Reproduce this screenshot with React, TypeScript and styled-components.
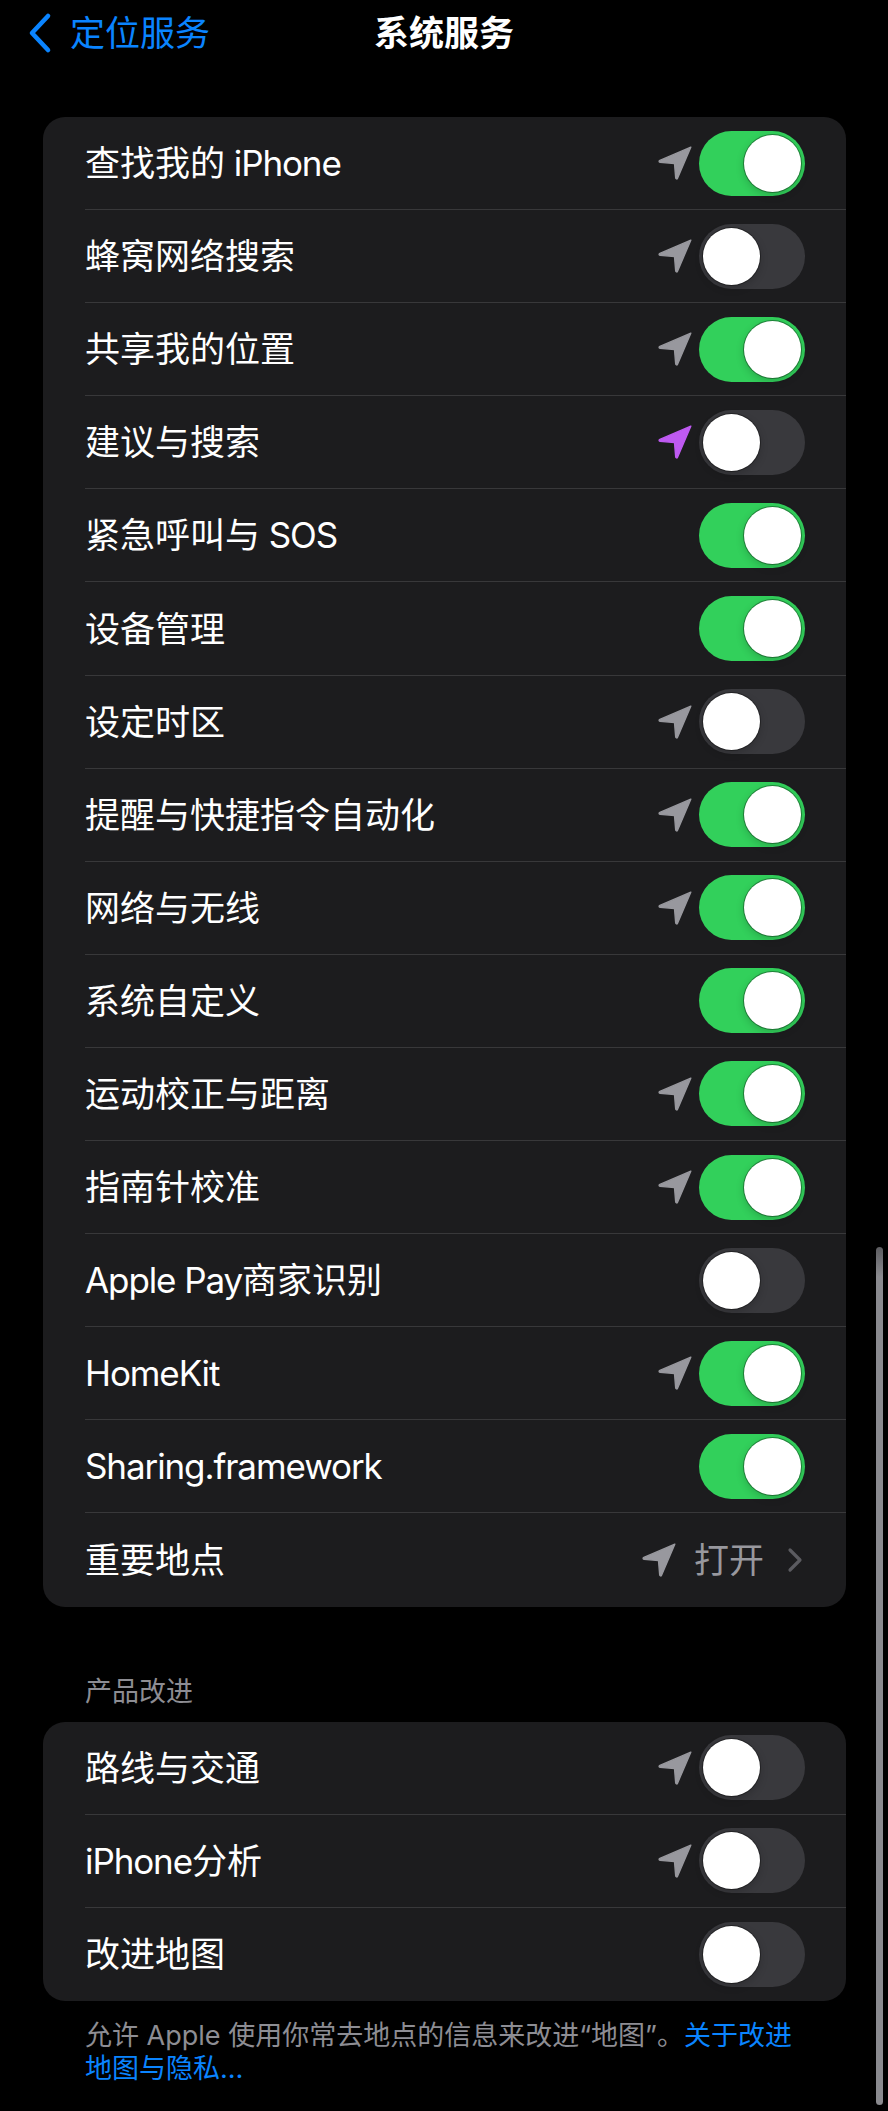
import { FunctionComponent } from 'react';
import styled, { createGlobalStyle } from 'styled-components';

const GlobalStyle = createGlobalStyle`
  html, body {
    margin: 0;
    padding: 0;
    background: #000;
  }
  body {
    font-family: Inter, "Noto Sans CJK SC", sans-serif;
    -webkit-font-smoothing: antialiased;
  }
`;

const Page = styled.div`
  position: relative;
  min-height: 2111px;
  background: #000;
  color: #fff;
  padding-bottom: 26px;
  box-sizing: border-box;
`;

const NavBar = styled.div`
  height: 66px;
  display: grid;
  grid-template-columns: 1fr auto 1fr;
  align-items: center;
`;

const BackButton = styled.div`
  display: flex;
  align-items: center;
  gap: 17px;
  padding-left: 27px;
  color: #0a84ff;
  font-size: 35px;
  line-height: 40px;
`;

const Title = styled.div`
  font-size: 35px;
  line-height: 40px;
  font-weight: 600;
  color: #fff;
`;

const Content = styled.div`
  padding: 51px 42px 0 43px;
  display: flex;
  flex-direction: column;
`;

const Card = styled.div`
  background: #1c1c1e;
  border-radius: 22px;
  overflow: hidden;
`;

const Row = styled.div`
  padding-left: 42px;
`;

const RowInner = styled.div<{ $last?: boolean }>`
  height: 93.1px;
  box-sizing: border-box;
  display: flex;
  align-items: center;
  padding-right: 41px;
  border-bottom: ${(p) => (p.$last ? 'none' : '1.5px solid #38383a')};
`;

const Label = styled.div`
  flex: 1;
  font-size: 35px;
  line-height: 42px;
  color: #fff;
  white-space: nowrap;
`;

const Latin = styled.span`
  letter-spacing: -1.1px;
`;

const Accessory = styled.div`
  display: flex;
  align-items: center;
  gap: 7px;
`;

const Track = styled.div<{ $on: boolean }>`
  width: 106px;
  height: 65px;
  border-radius: 33px;
  background: ${(p) => (p.$on ? '#32d05b' : '#39393d')};
  display: flex;
  align-items: center;
  justify-content: ${(p) => (p.$on ? 'flex-end' : 'flex-start')};
  padding: 0 4px;
  box-sizing: border-box;
`;

const Knob = styled.div`
  width: 57px;
  height: 57px;
  border-radius: 50%;
  background: #fff;
  box-shadow: 0 0 0 1px rgba(0, 0, 0, 0.35), 0 3px 8px rgba(0, 0, 0, 0.2);
`;

const Detail = styled.div`
  display: flex;
  align-items: center;
  gap: 18px;
  color: #98989e;
  font-size: 35px;
  line-height: 42px;
  margin-right: 2px;
`;

const DetailText = styled.span`
  margin-right: 5px;
`;

const SectionHeader = styled.div`
  margin: 68px 0 14px 42px;
  font-size: 27px;
  line-height: 33px;
  color: #8d8d93;
`;

const Footer = styled.p`
  margin: 18px 0 0 42px;
  font-size: 27px;
  line-height: 33px;
  color: #8d8d93;
`;

const Link = styled.span`
  color: #0a84ff;
`;

const ScrollIndicator = styled.div`
  position: absolute;
  right: 5px;
  top: 1247px;
  width: 7px;
  height: 858px;
  border-radius: 4px;
  background: linear-gradient(#5c5c60, #8a8a8f 30px, #8a8a8f);
`;

const LocationArrow: FunctionComponent<{ color: string; size?: number }> = ({ color, size = 34 }) => (
  <svg width={size} height={size} viewBox='2 2 20 20'>
    <path
      d='M21.3 2.7 L3.1 10.5 C2.4 10.8 2.5 11.5 3.2 11.6 L11.7 12.3 L12.4 20.8 C12.5 21.5 13.2 21.6 13.5 20.9 Z'
      fill={color}
      stroke={color}
      strokeWidth={0.8}
      strokeLinejoin='round'
    />
  </svg>
);

const BackChevron = () => (
  <svg width='26' height='42' viewBox='0 0 26 42'>
    <polyline
      points='21,4 5,21 21,38'
      fill='none'
      stroke='#0a84ff'
      strokeWidth='4.6'
      strokeLinecap='round'
      strokeLinejoin='round'
    />
  </svg>
);

const DisclosureChevron = () => (
  <svg width='16' height='26' viewBox='0 0 16 26'>
    <polyline
      points='3,3 13,13 3,23'
      fill='none'
      stroke='#5b5b60'
      strokeWidth='3.2'
      strokeLinecap='round'
      strokeLinejoin='round'
    />
  </svg>
);

// SF tracks latin text tighter than Inter does, CJK stays as is
const LabelText = ({ text }: { text: string }) => (
  <>
    {text.split(/([A-Za-z0-9. ]+)/).map((part, i) =>
      /[A-Za-z]/.test(part) ? <Latin key={i}>{part}</Latin> : part
    )}
  </>
);

type Arrow = 'gray' | 'purple' | null;

type ToggleItem = {
  label: string;
  arrow: Arrow;
  on: boolean;
};

const arrowColor = (a: Arrow) => (a === 'purple' ? '#bf5af2' : '#98989e');

const Toggle = ({ on }: { on: boolean }) => (
  <Track $on={on}>
    <Knob />
  </Track>
);

const ToggleRow = ({ item, last }: { item: ToggleItem; last?: boolean }) => (
  <Row>
    <RowInner $last={last}>
      <Label>
        <LabelText text={item.label} />
      </Label>
      <Accessory>
        {item.arrow && <LocationArrow color={arrowColor(item.arrow)} />}
        <Toggle on={item.on} />
      </Accessory>
    </RowInner>
  </Row>
);

const systemItems: ToggleItem[] = [
  { label: '查找我的 iPhone', arrow: 'gray', on: true },
  { label: '蜂窝网络搜索', arrow: 'gray', on: false },
  { label: '共享我的位置', arrow: 'gray', on: true },
  { label: '建议与搜索', arrow: 'purple', on: false },
  { label: '紧急呼叫与 SOS', arrow: null, on: true },
  { label: '设备管理', arrow: null, on: true },
  { label: '设定时区', arrow: 'gray', on: false },
  { label: '提醒与快捷指令自动化', arrow: 'gray', on: true },
  { label: '网络与无线', arrow: 'gray', on: true },
  { label: '系统自定义', arrow: null, on: true },
  { label: '运动校正与距离', arrow: 'gray', on: true },
  { label: '指南针校准', arrow: 'gray', on: true },
  { label: 'Apple Pay商家识别', arrow: null, on: false },
  { label: 'HomeKit', arrow: 'gray', on: true },
  { label: 'Sharing.framework', arrow: null, on: true },
];

const productItems: ToggleItem[] = [
  { label: '路线与交通', arrow: 'gray', on: false },
  { label: 'iPhone分析', arrow: 'gray', on: false },
  { label: '改进地图', arrow: null, on: false },
];

const App: FunctionComponent = () => (
  <Page>
    <GlobalStyle />
    <NavBar>
      <BackButton>
        <BackChevron />
        <span>定位服务</span>
      </BackButton>
      <Title>系统服务</Title>
      <div />
    </NavBar>
    <Content>
      <Card>
        {systemItems.map((item) => (
          <ToggleRow key={item.label} item={item} />
        ))}
        <Row>
          <RowInner $last>
            <Label>重要地点</Label>
            <Detail>
              <LocationArrow color='#98989e' />
              <DetailText>打开</DetailText>
              <DisclosureChevron />
            </Detail>
          </RowInner>
        </Row>
      </Card>

      <SectionHeader>产品改进</SectionHeader>
      <Card>
        {productItems.map((item, i) => (
          <ToggleRow key={item.label} item={item} last={i === productItems.length - 1} />
        ))}
      </Card>
      <Footer>
        允许 Apple 使用你常去地点的信息来改进“地图”。<Link>关于改进<br />地图与隐私…</Link>
      </Footer>
    </Content>
    <ScrollIndicator />
  </Page>
);

export default App;
